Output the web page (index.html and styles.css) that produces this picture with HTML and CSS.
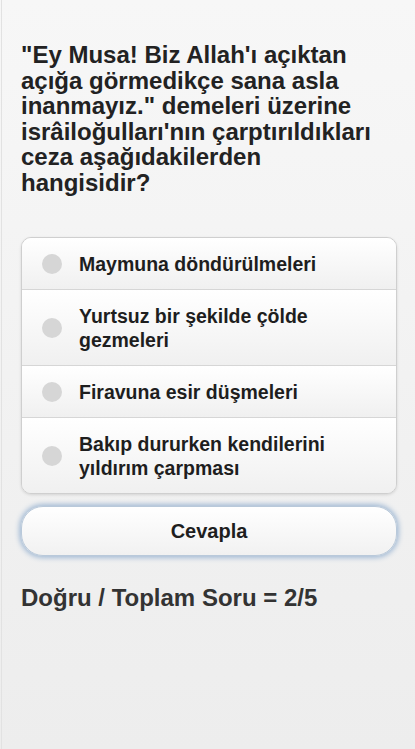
FILE: index.html
```
<!DOCTYPE html>
<html lang="tr">
<head>
<meta charset="utf-8">
<link rel="stylesheet" href="styles.css">
</head>
<body>
<div class="page">
  <h1 class="question">"Ey Musa! Biz Allah'ı açıktan açığa görmedikçe sana asla inanmayız." demeleri üzerine isrâiloğulları'nın çarptırıldıkları ceza aşağıdakilerden hangisidir?</h1>
  <div class="options">
    <label class="opt"><span class="radio"></span><span class="txt">Maymuna döndürülmeleri</span></label>
    <label class="opt"><span class="radio"></span><span class="txt">Yurtsuz bir şekilde çölde gezmeleri</span></label>
    <label class="opt"><span class="radio"></span><span class="txt">Firavuna esir düşmeleri</span></label>
    <label class="opt"><span class="radio"></span><span class="txt">Bakıp dururken kendilerini yıldırım çarpması</span></label>
  </div>
  <div class="btn">Cevapla</div>
  <div class="score">Doğru / Toplam Soru = 2/5</div>
</div>
</body>
</html>
```
FILE: styles.css
```
html, body {
  margin: 0;
  padding: 0;
  height: 100%;
}
body {
  background: linear-gradient(#f7f7f7, #ededed);
  font-family: "Liberation Sans", Arial, sans-serif;
  color: #222;
}
.page {
  min-height: 100%;
  box-sizing: border-box;
  padding: 42px 18px 20px 19px;
  border-left: 1px solid #e2e2e2;
  margin-left: 1px;
}
.question {
  margin: 0;
  font-size: 24px;
  line-height: 25.5px;
  font-weight: bold;
  color: #222;
}
.options {
  margin-top: 42px;
  border: 1px solid #cfcfcf;
  border-radius: 10px;
  overflow: hidden;
  box-shadow: 0 1px 3px rgba(0,0,0,0.12);
}
.opt {
  display: flex;
  align-items: center;
  box-sizing: border-box;
  padding: 13.5px 14px 13.5px 20px;
  background: linear-gradient(#ffffff, #f0f0f0);
  border-top: 1px solid #d6d6d6;
}
.opt:first-child {
  border-top: 0;
}
.radio {
  flex: none;
  width: 20px;
  height: 20px;
  border-radius: 50%;
  background: #d6d6d6;
  margin-right: 17px;
}
.txt {
  font-size: 19.5px;
  line-height: 24px;
  font-weight: bold;
  color: #1e1e1e;
}
.btn {
  margin-top: 12px;
  height: 48px;
  border: 1px solid #b9c9da;
  border-radius: 22px;
  background: linear-gradient(#ffffff, #f1f1f1);
  box-shadow: 0 0 5px 2px #a5bcd6;
  display: flex;
  align-items: center;
  justify-content: center;
  font-size: 20px;
  font-weight: bold;
  color: #1e1e1e;
}
.score {
  margin-top: 30px;
  font-size: 24px;
  font-weight: bold;
  color: #333;
  line-height: 24px;
}
```
